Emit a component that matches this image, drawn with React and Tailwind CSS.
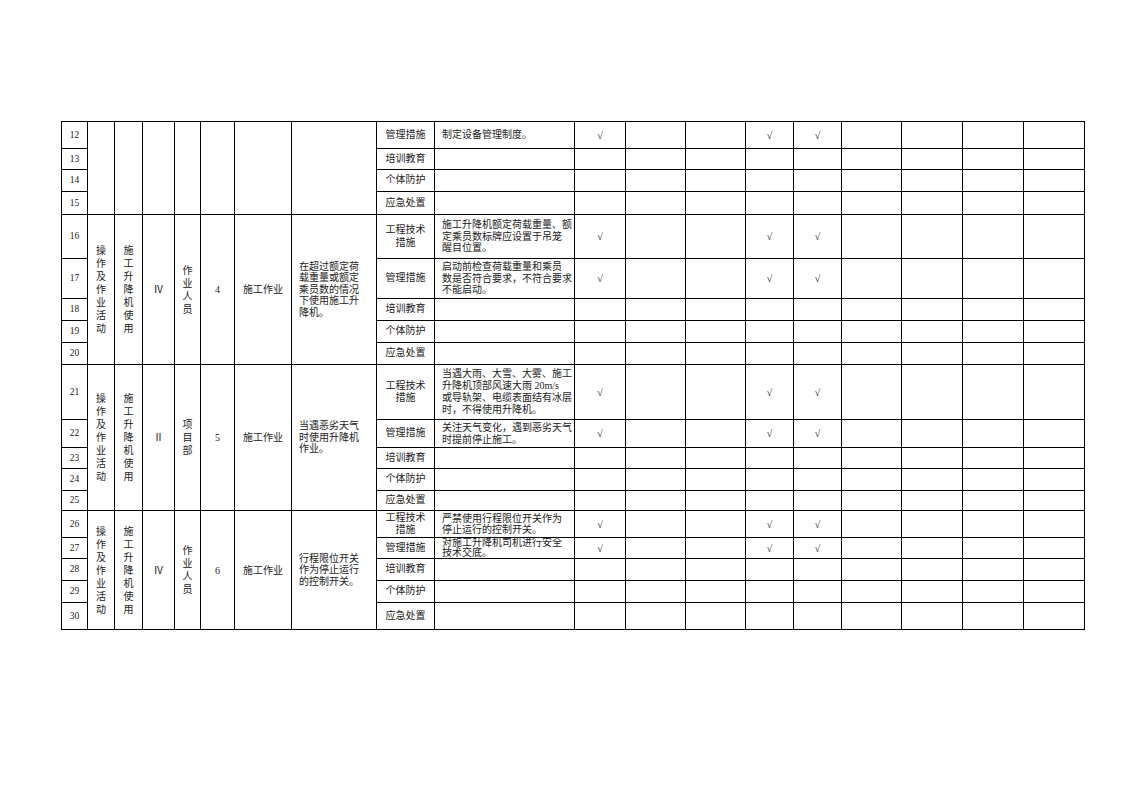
import React from "react";

const colWidths = [
  "w-[26px]", "w-[27px]", "w-[28px]", "w-[32px]", "w-[26px]", "w-[34px]", "w-[57px]",
  "w-[85px]", "w-[58px]", "w-[140px]", "w-[51px]", "w-[60px]", "w-[60px]", "w-[48px]",
  "w-[48px]", "w-[60px]", "w-[61px]", "w-[61px]", "w-[61px]",
];

// each group of rows shares the merged cells on the left
const groups = [
  {
    merged: null,
    rows: [
      { n: 12, h: "h-[27px]", type: ["管理措施"], text: ["制定设备管理制度。"], check: true },
      { n: 13, h: "h-[21px]", type: ["培训教育"] },
      { n: 14, h: "h-[22px]", type: ["个体防护"] },
      { n: 15, h: "h-[23px]", type: ["应急处置"] },
    ],
  },
  {
    merged: {
      a: "操作及作业活动",
      b: "施工升降机使用",
      level: "Ⅳ",
      who: "作业人员",
      no: "4",
      kind: "施工作业",
      desc: ["在超过额定荷", "载重量或额定", "乘员数的情况", "下使用施工升", "降机。"],
    },
    rows: [
      {
        n: 16, h: "h-[44px]", type: ["工程技术", "措施"],
        text: ["施工升降机额定荷载重量、额", "定乘员数标牌应设置于吊笼", "醒目位置。"], check: true,
      },
      {
        n: 17, h: "h-[40px]", type: ["管理措施"],
        text: ["启动前检查荷载重量和乘员", "数是否符合要求，不符合要求", "不能启动。"], check: true,
      },
      { n: 18, h: "h-[22px]", type: ["培训教育"] },
      { n: 19, h: "h-[22px]", type: ["个体防护"] },
      { n: 20, h: "h-[22px]", type: ["应急处置"] },
    ],
  },
  {
    merged: {
      a: "操作及作业活动",
      b: "施工升降机使用",
      level: "Ⅱ",
      who: "项目部",
      no: "5",
      kind: "施工作业",
      desc: ["当遇恶劣天气", "时使用升降机", "作业。"],
    },
    rows: [
      {
        n: 21, h: "h-[55px]", type: ["工程技术", "措施"],
        text: ["当遇大雨、大雪、大雾、施工", "升降机顶部风速大雨 20m/s", "或导轨架、电缆表面结有冰层", "时，不得使用升降机。"],
        check: true, lead: "leading-[12px]",
      },
      {
        n: 22, h: "h-[28px]", type: ["管理措施"],
        text: ["关注天气变化，遇到恶劣天气", "时提前停止施工。"], check: true,
      },
      { n: 23, h: "h-[21px]", type: ["培训教育"] },
      { n: 24, h: "h-[22px]", type: ["个体防护"] },
      { n: 25, h: "h-[20px]", type: ["应急处置"] },
    ],
  },
  {
    merged: {
      a: "操作及作业活动",
      b: "施工升降机使用",
      level: "Ⅳ",
      who: "作业人员",
      no: "6",
      kind: "施工作业",
      desc: ["行程限位开关", "作为停止运行", "的控制开关。"],
    },
    rows: [
      {
        n: 26, h: "h-[27px]", type: ["工程技术", "措施"], typeLead: "leading-[12px]",
        text: ["严禁使用行程限位开关作为", "停止运行的控制开关。"], check: true,
      },
      {
        n: 27, h: "h-[21px]", type: ["管理措施"],
        text: ["对施工升降机司机进行安全", "技术交底。"], check: true, lead: "leading-[10px]",
      },
      { n: 28, h: "h-[22px]", type: ["培训教育"] },
      { n: 29, h: "h-[22px]", type: ["个体防护"] },
      { n: 30, h: "h-[27px]", type: ["应急处置"] },
    ],
  },
];

const cell = "border border-black p-0 align-middle";

function Vertical({ text }) {
  return (
    <div className="flex flex-col items-center leading-[13px]">
      {text.split("").map((c, i) => (
        <span key={i}>{c}</span>
      ))}
    </div>
  );
}

function Lines({ lines, className }) {
  return (
    <div className={className}>
      {lines.map((l, i) => (
        <div key={i} className="whitespace-nowrap">
          {l}
        </div>
      ))}
    </div>
  );
}

function Check({ on }) {
  return (
    <td className={cell + " text-center text-[10px]"}>{on ? "√" : ""}</td>
  );
}

export default function App() {
  return (
    <div className="w-[1122px] h-[793px] bg-white pt-[121px] pl-[61px] text-[#222] font-['Liberation_Serif','Noto_Sans_CJK_SC',serif] text-[10px]">
      <table className="table-fixed border-collapse w-[1023px]">
        <colgroup>
          {colWidths.map((w, i) => (
            <col key={i} className={w} />
          ))}
        </colgroup>
        <tbody>
          {groups.map((g) =>
            g.rows.map((r, ri) => (
              <tr key={r.n} className={r.h}>
                <td className={cell + " text-center text-[9.5px]"}>{r.n}</td>
                {ri === 0 &&
                  (g.merged ? (
                    <>
                      <td rowSpan={g.rows.length} className={cell}>
                        <Vertical text={g.merged.a} />
                      </td>
                      <td rowSpan={g.rows.length} className={cell}>
                        <Vertical text={g.merged.b} />
                      </td>
                      <td rowSpan={g.rows.length} className={cell + " text-center"}>
                        {g.merged.level}
                      </td>
                      <td rowSpan={g.rows.length} className={cell}>
                        <Vertical text={g.merged.who} />
                      </td>
                      <td rowSpan={g.rows.length} className={cell + " text-center"}>
                        {g.merged.no}
                      </td>
                      <td rowSpan={g.rows.length} className={cell + " text-center"}>
                        {g.merged.kind}
                      </td>
                      <td rowSpan={g.rows.length} className={cell}>
                        <Lines lines={g.merged.desc} className="pl-[7px] leading-[11.5px]" />
                      </td>
                    </>
                  ) : (
                    <>
                      {[0, 1, 2, 3, 4, 5, 6].map((k) => (
                        <td key={k} rowSpan={g.rows.length} className={cell}></td>
                      ))}
                    </>
                  ))}
                <td className={cell}>
                  <Lines lines={r.type} className={"text-center " + (r.typeLead || "leading-[12.5px]")} />
                </td>
                <td className={cell}>
                  {r.text && (
                    <Lines lines={r.text} className={"pl-[7px] " + (r.lead || "leading-[11.5px]")} />
                  )}
                </td>
                <Check on={r.check} />
                <td className={cell}></td>
                <td className={cell}></td>
                <Check on={r.check} />
                <Check on={r.check} />
                <td className={cell}></td>
                <td className={cell}></td>
                <td className={cell}></td>
                <td className={cell}></td>
              </tr>
            ))
          )}
        </tbody>
      </table>
    </div>
  );
}
